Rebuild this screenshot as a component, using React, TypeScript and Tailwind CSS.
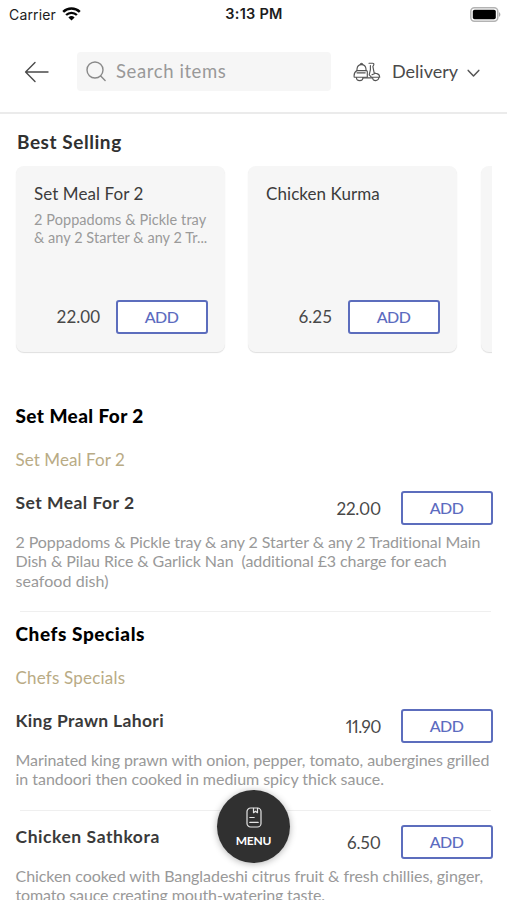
import React from "react";

type Line = { text: string; track: string };
type Item = {
  name: string;
  nameTrack: string;
  price: string;
  priceTrack: string;
  lines: Line[];
};
type Section = { title: string; titleTrack: string; subTrack: string; items: Item[] };

const sections: Section[] = [
  {
    title: "Set Meal For 2",
    titleTrack: "tracking-[0.42px]",
    subTrack: "tracking-[0.08px]",
    items: [
      {
        name: "Set Meal For 2",
        nameTrack: "tracking-[0.47px]",
        price: "22.00",
        priceTrack: "tracking-[-0.2px]",
        lines: [
          { text: "2 Poppadoms & Pickle tray & any 2 Starter & any 2 Traditional Main", track: "tracking-[-0.09px]" },
          { text: "Dish & Pilau Rice & Garlick Nan  (additional £3 charge for each", track: "tracking-[-0.08px]" },
          { text: "seafood dish)", track: "tracking-[0.05px]" },
        ],
      },
    ],
  },
  {
    title: "Chefs Specials",
    titleTrack: "tracking-[0.57px]",
    subTrack: "tracking-[0.2px]",
    items: [
      {
        name: "King Prawn Lahori",
        nameTrack: "tracking-[0.34px]",
        price: "11.90",
        priceTrack: "tracking-[-0.5px]",
        lines: [
          { text: "Marinated king prawn with onion, pepper, tomato, aubergines grilled", track: "tracking-[-0.07px]" },
          { text: "in tandoori then cooked in medium spicy thick sauce.", track: "tracking-[-0.03px]" },
        ],
      },
      {
        name: "Chicken Sathkora",
        nameTrack: "tracking-[0.55px]",
        price: "6.50",
        priceTrack: "tracking-[0px]",
        lines: [
          { text: "Chicken cooked with Bangladeshi citrus fruit & fresh chillies, ginger,", track: "tracking-[-0.06px]" },
          { text: "tomato sauce creating mouth-watering taste.", track: "tracking-[-0.12px]" },
        ],
      },
    ],
  },
];

function AddButton() {
  return (
    <button className="flex h-[34px] w-[92px] shrink-0 items-center justify-center rounded-[3px] border-2 border-[#5c6dbd] bg-white pr-px text-[16px] font-medium tracking-[-0.5px] text-[#5c6bc0]">
      ADD
    </button>
  );
}

function StatusBar() {
  return (
    <div className="flex h-7 shrink-0 items-center justify-between pl-[9px] pr-[6px] font-['Inter','Liberation_Sans',sans-serif] text-[#1c1c1c]">
      <div className="flex w-[100px] items-center gap-[6px]">
        <span className="text-[14px] tracking-[0.15px]">Carrier</span>
        <svg width="19" height="14" viewBox="0 0 19 14" fill="none" stroke="#050505">
          <path d="M1.2 4.9a12 12 0 0 1 16.6 0" strokeWidth="2.5" />
          <path d="M4.1 8a7.8 7.8 0 0 1 10.8 0" strokeWidth="2.4" />
          <path d="M9.5 13.6 6.4 10.5a4.5 4.5 0 0 1 6.2 0Z" fill="#050505" stroke="none" />
        </svg>
      </div>
      <span className="mr-[2px] text-[14.5px] font-semibold tracking-[0.25px]">3:13 PM</span>
      <div className="flex w-[100px] justify-end">
        <svg width="31" height="15" viewBox="0 0 31 15">
          <rect x="0.8" y="0.8" width="27" height="13.4" rx="3.6" fill="#fff" stroke="#b3b3b3" strokeWidth="1.5" />
          <rect x="2.8" y="2.7" width="23" height="9.6" rx="1.8" fill="#000" />
          <path d="M29 5.2c1.8.7 1.8 3.9 0 4.6Z" fill="#aaa" />
        </svg>
      </div>
    </div>
  );
}

function Scooter() {
  return (
    <svg width="28" height="20" viewBox="0 0 28 20" fill="none" stroke="#555" strokeWidth="1.15" strokeLinecap="round" strokeLinejoin="round">
      <path d="M4 8.6V7q.4-4.4 4.5-4.4T13 7v1.6" />
      <path d="M7.4 2.4q.1-1.2 1.1-1.2t1.1 1.2" />
      <path d="M4 8.6h9.4q.9 0 .9 1v5.6H1.2q-.7-4.6 2.8-6.6Z" />
      <path d="M4 10.8h8.2" />
      <path d="M3.4 15.5a3.3 3.1 0 0 0 6.6 0" />
      <path d="M10 15.8h9" />
      <path d="M16 1.2h3.6q1.5 0 1.2 1.6l-.9 1.8 1.2 6q1.2 1 2.8 1 2.6.4 2.8 3.6h-8.3l-2.2-2.4M17.4 3.6v4l-1.2 5.2" />
      <path d="m19 12.8 3.4-1.6" />
      <path d="M19.6 15.5a3.1 3.1 0 0 0 6.2 0" />
    </svg>
  );
}

function Header() {
  return (
    <header className="flex h-[86px] shrink-0 items-center border-b-2 border-[#ebebeb] pl-6 pt-[3px]">
      <svg width="25" height="22" viewBox="0 0 25 22" fill="none" stroke="#4a4a4a" strokeWidth="1.4" strokeLinecap="round" strokeLinejoin="round">
        <path d="M24 11H1.8M11 1.6 1.6 11l9.4 9.4" />
      </svg>
      <div className="ml-7 flex h-[39px] w-[254px] items-center rounded-[4px] bg-[#f6f6f6] pl-[9px]">
        <svg width="20" height="21" viewBox="0 0 20 21" fill="none" stroke="#8a8a8a" strokeWidth="1.4" strokeLinecap="round">
          <circle cx="9" cy="9" r="8" />
          <path d="m14.7 15 4.4 4.6" />
        </svg>
        <span className="ml-[10px] text-[18.5px] tracking-[0.6px] text-[#999]">Search items</span>
      </div>
      <div className="ml-[22px] flex items-center">
        <Scooter />
        <span className="ml-[11px] w-[67px] whitespace-nowrap text-[18px] tracking-[0px] text-[#4a4a4a]">Delivery</span>
        <svg className="ml-[8px] mt-[3px]" width="13" height="9" viewBox="0 0 13 9" fill="none" stroke="#555" strokeWidth="1.5" strokeLinecap="round" strokeLinejoin="round">
          <path d="m1.2 1.4 5.3 5.6 5.3-5.6" />
        </svg>
      </div>
    </header>
  );
}

function Card({ title, price, lines }: { title: string; price: string; lines: Line[] }) {
  return (
    <div className="flex h-[186px] w-[209px] shrink-0 flex-col rounded-[8px] bg-[#f6f6f6] pb-[18px] pl-[18px] pr-[17px] pt-4 shadow-[0_1px_1px_rgba(0,0,0,0.13)]">
      <div className="h-6 whitespace-nowrap text-[17px] leading-6 tracking-[0.07px] text-[#3c3c3c]">{title}</div>
      <div className="mt-[5px] text-[14.5px] leading-[18px] text-[#9a9a9a]">
        {lines.map((l) => (
          <div key={l.text} className={`whitespace-pre ${l.track}`}>{l.text}</div>
        ))}
      </div>
      <div className="mt-auto flex items-center justify-end gap-4">
        <span className="text-[17px] text-[#484848]">{price}</span>
        <AddButton />
      </div>
    </div>
  );
}

function MenuItem({ item }: { item: Item }) {
  return (
    <div>
      <div className="flex h-[40.5px] items-start">
        <div className={`h-6 flex-1 text-[17.5px] font-bold leading-6 text-[#3a3a3a] ${item.nameTrack}`}>{item.name}</div>
        <span className={`mr-5 text-[17px] proportional-nums leading-[35px] text-[#484848] ${item.priceTrack}`}>{item.price}</span>
        <AddButton />
      </div>
      <div className="pb-[21px] text-[16px] leading-[19.5px] text-[#999]">
        {item.lines.map((l) => (
          <div key={l.text} className={`whitespace-pre ${l.track}`}>{l.text}</div>
        ))}
      </div>
    </div>
  );
}

export default function App() {
  return (
    <div className="relative flex h-[900px] w-[507px] flex-col overflow-hidden bg-white font-['Lato','Liberation_Sans',sans-serif]">
      <StatusBar />
      <Header />
      <main>
        <h2 className="pl-[17px] pt-4 text-[19px] font-bold leading-6 tracking-[0.55px] text-[#303030]">Best Selling</h2>
        <div className="mr-[15px] flex h-[218px] gap-[23px] overflow-hidden pl-4 pt-3">
          <Card
            title="Set Meal For 2"
            price="22.00"
            lines={[
              { text: "2 Poppadoms & Pickle tray", track: "tracking-[0.07px]" },
              { text: "& any 2 Starter & any 2 Tr...", track: "tracking-[0.03px]" },
            ]}
          />
          <Card title="Chicken Kurma" price="6.25" lines={[]} />
          <div className="ml-px h-[186px] w-[209px] shrink-0 rounded-[8px] bg-[#f6f6f6] shadow-[0_1px_1px_rgba(0,0,0,0.13)]" />
        </div>
        <div className="pl-[15.5px] pr-[14px] pt-8">
          {sections.map((s, i) => (
            <section key={s.title} className={i ? "pt-[10px]" : ""}>
              <h2 className={`h-6 text-[19px] font-black leading-6 text-black ${s.titleTrack}`}>{s.title}</h2>
              <h3 className={`mt-5 h-6 text-[17px] leading-6 text-[#b9ab85] ${s.subTrack}`}>{s.title}</h3>
              <div className="pt-[19px]">
                {s.items.map((item, j) => (
                  <div key={item.name} className={j ? "pt-[14.5px]" : ""}>
                    <MenuItem item={item} />
                    <div className="ml-1 mr-[2px] h-px bg-[#efefef]" />
                  </div>
                ))}
              </div>
            </section>
          ))}
        </div>
      </main>
      <button className="absolute left-[217px] top-[790px] flex h-[73px] w-[73px] flex-col items-center rounded-full bg-[#303030] pt-[17px] text-white shadow-[0_1px_7px_rgba(0,0,0,0.3)]">
        <svg width="16" height="21" viewBox="0 0 16 21" fill="none" stroke="#e5e5e5" strokeWidth="1.2" strokeLinecap="round" strokeLinejoin="round">
          <rect x="1" y="1" width="14" height="19" rx="3.6" />
          <path d="M7.5 1.3v4.4l2-1.5 2 1.5V1.3M3.8 10.5h4.4M3.8 15.4h8.4" />
        </svg>
        <span className="mt-[5px] text-[12px] font-bold leading-[15px] tracking-[-0.2px]">MENU</span>
      </button>
    </div>
  );
}
